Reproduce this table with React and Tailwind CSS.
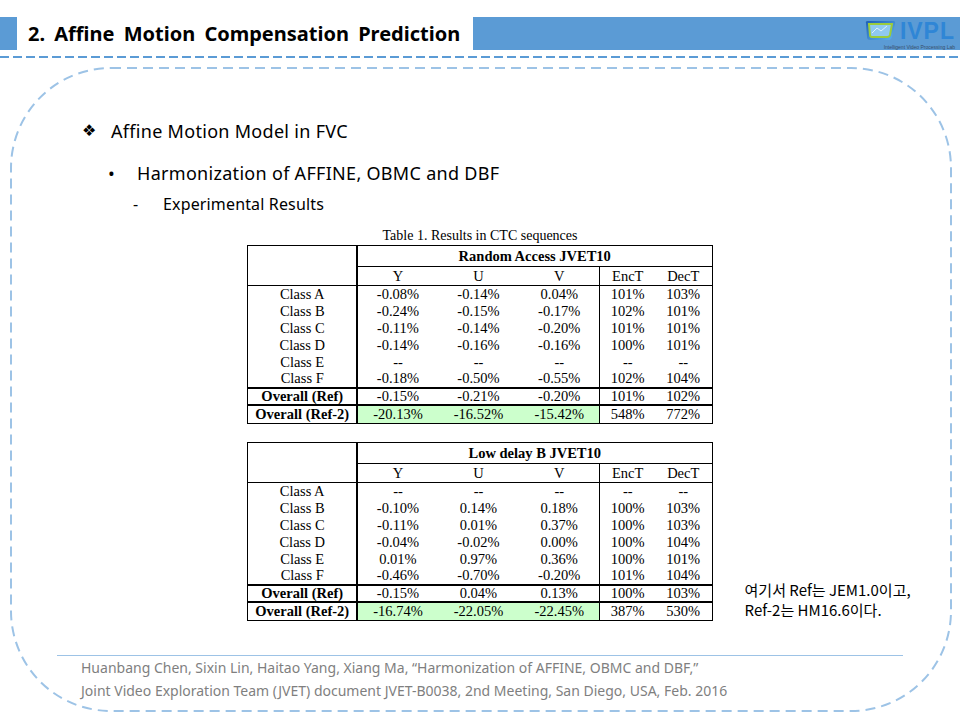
import React from 'react';

const ra = {
  title: 'Random Access JVET10',
  rows: [
    ['Class A', '-0.08%', '-0.14%', '0.04%', '101%', '103%'],
    ['Class B', '-0.24%', '-0.15%', '-0.17%', '102%', '101%'],
    ['Class C', '-0.11%', '-0.14%', '-0.20%', '101%', '101%'],
    ['Class D', '-0.14%', '-0.16%', '-0.16%', '100%', '101%'],
    ['Class E', '--', '--', '--', '--', '--'],
    ['Class F', '-0.18%', '-0.50%', '-0.55%', '102%', '104%'],
  ],
  ref: ['-0.15%', '-0.21%', '-0.20%', '101%', '102%'],
  ref2: ['-20.13%', '-16.52%', '-15.42%', '548%', '772%'],
};

const ld = {
  title: 'Low delay B JVET10',
  rows: [
    ['Class A', '--', '--', '--', '--', '--'],
    ['Class B', '-0.10%', '0.14%', '0.18%', '100%', '103%'],
    ['Class C', '-0.11%', '0.01%', '0.37%', '100%', '103%'],
    ['Class D', '-0.04%', '-0.02%', '0.00%', '100%', '104%'],
    ['Class E', '0.01%', '0.97%', '0.36%', '100%', '101%'],
    ['Class F', '-0.46%', '-0.70%', '-0.20%', '101%', '104%'],
  ],
  ref: ['-0.15%', '0.04%', '0.13%', '100%', '103%'],
  ref2: ['-16.74%', '-22.05%', '-22.45%', '387%', '530%'],
};

const ResultTable = ({ data }) => (
  <table className="mx-auto border-collapse border border-black text-[14.5px] text-black table-fixed w-[464px]" style={{ fontFamily: '"Liberation Serif", serif' }}>
    <colgroup>
      <col className="w-[109px]" />
      <col className="w-[81px]" />
      <col className="w-[81px]" />
      <col className="w-[81px]" />
      <col className="w-[55px]" />
      <col className="w-[57px]" />
    </colgroup>
    <tbody>
      <tr className="h-[21px]">
        <td rowSpan={2} className="border border-black border-r-2"></td>
        <td colSpan={5} className="border border-black text-center font-bold leading-none">{data.title}</td>
      </tr>
      <tr className="h-[19px] leading-none">
        <td className="text-center border-b border-black">Y</td>
        <td className="text-center border-b border-black">U</td>
        <td className="text-center border-b border-black">V</td>
        <td className="text-center border-b border-l border-black">EncT</td>
        <td className="text-center border-b border-black">DecT</td>
      </tr>
      {data.rows.map((r, i) => (
        <tr key={i} className="h-[17px] leading-none">
          <td className="text-center border-r-2 border-black">{r[0]}</td>
          <td className="text-center">{r[1]}</td>
          <td className="text-center">{r[2]}</td>
          <td className="text-center">{r[3]}</td>
          <td className="text-center border-l border-black">{r[4]}</td>
          <td className="text-center">{r[5]}</td>
        </tr>
      ))}
      <tr className="h-[17px] leading-none border-t-2 border-black">
        <td className="text-center font-bold border-r-2 border-black">Overall (Ref)</td>
        {data.ref.map((v, i) => (
          <td key={i} className={`text-center ${i === 3 ? 'border-l border-black' : ''}`}>{v}</td>
        ))}
      </tr>
      <tr className="h-[19px] leading-none border-t-2 border-black">
        <td className="text-center font-bold border-r-2 border-black">Overall (Ref-2)</td>
        {data.ref2.map((v, i) => (
          <td key={i} className={`text-center ${i < 3 ? 'bg-[#ccffcc]' : ''} ${i === 3 ? 'border-l border-black' : ''}`}>{v}</td>
        ))}
      </tr>
    </tbody>
  </table>
);

const Logo = () => (
  <div className="flex flex-col items-end pr-[5px] pt-[1px]">
    <div className="flex items-center gap-[4px] h-[26px]">
      <svg width="32" height="22" viewBox="0 0 32 22">
        <defs>
          <linearGradient id="tvb" x1="0" y1="0" x2="1" y2="1">
            <stop offset="0" stopColor="#1e5fb4" />
            <stop offset="1" stopColor="#5fb3ec" />
          </linearGradient>
        </defs>
        <path d="M2 3 Q1 1 4 1 L29 1 Q32 1 31 4 L28 17 Q27 20 24 20 L6 20 Q3 20 3 17 Z" fill="url(#tvb)" />
        <path d="M5 4 L28 4 L26 15 Q25.5 17 23 17 L8 17 Q6 17 6 15 Z" fill="#8fc9f0" stroke="#9ccc3c" strokeWidth="2" />
        <path d="M8 13 L13 8 L17 11 L23 6" fill="none" stroke="#dff2fb" strokeWidth="1" />
      </svg>
      <span className="text-[23px] leading-[26px] font-bold text-[#2f86d6] tracking-[1px]" style={{ fontFamily: '"Liberation Sans", sans-serif' }}>IVPL</span>
    </div>
    <span className="mt-[1px] text-[5px] leading-[5px] text-[#3a4f6a] whitespace-nowrap" style={{ fontFamily: '"Liberation Sans", sans-serif' }}>Intelligent Video Processing Lab</span>
  </div>
);

export default function App() {
  const body = { fontFamily: '"Noto Sans", "Noto Sans CJK KR", sans-serif' };
  return (
    <div className="relative w-[960px] h-[720px] bg-white overflow-hidden" style={body}>
      {/* rounded dashed frame */}
      <svg className="absolute left-0 top-0 pointer-events-none" width="960" height="720">
        <rect x="11" y="68" width="940" height="643" rx="100" ry="100" fill="none" stroke="#9dc3e6" strokeWidth="2" strokeDasharray="10 6" />
      </svg>

      {/* header */}
      <div className="relative mt-[17px] h-[33px] flex">
        <div className="w-[17px] bg-[#5b9bd5]" />
        <div className="w-[456px] flex items-center pl-[11px]">
          <span className="text-[20px] font-bold text-black [word-spacing:4px] whitespace-nowrap">2. Affine Motion Compensation Prediction</span>
        </div>
        <div className="flex-1 bg-[#5b9bd5] flex justify-end">
          <Logo />
        </div>
      </div>
      <div className="relative mt-[6px] h-[2px] bg-[repeating-linear-gradient(90deg,#5b9bd5_0_9px,transparent_9px_13px)]" />

      {/* bullets */}
      <div className="relative mt-[60px] h-[26px] flex items-center pl-[82px]">
        <span className="w-[29px] text-[16px] text-black" style={{ fontFamily: '"DejaVu Sans", sans-serif' }}>❖</span>
        <span className="text-[18px] tracking-[0.3px] text-black">Affine Motion Model in FVC</span>
      </div>
      <div className="relative mt-[16px] h-[26px] flex items-center pl-[108px]">
        <span className="w-[29px] text-[18px] text-black">•</span>
        <span className="text-[18px] tracking-[0.3px] text-black">Harmonization of AFFINE, OBMC and DBF</span>
      </div>
      <div className="relative mt-[7px] h-[22px] flex items-center pl-[133px]">
        <span className="w-[30px] text-[16px] text-black">-</span>
        <span className="text-[16px] tracking-[0.15px] text-black">Experimental Results</span>
      </div>

      {/* tables */}
      <div className="relative mt-[13px] h-[16px] leading-[16px] text-center text-[14px] text-black" style={{ fontFamily: '"Liberation Serif", serif' }}>
        Table 1. Results in CTC sequences
      </div>
      <div className="relative mt-[1px]">
        <ResultTable data={ra} />
      </div>
      <div className="relative mt-[18px] grid grid-cols-[1fr_auto_1fr]">
        <div />
        <ResultTable data={ld} />
        <div className="flex items-end pl-[32px] pb-[1px]">
          <p className="text-[15px] leading-[20px] text-black whitespace-nowrap" style={{ fontFamily: '"Noto Sans CJK KR", sans-serif' }}>
            여기서 Ref는 JEM1.0이고,<br />Ref-2는 HM16.6이다.
          </p>
        </div>
      </div>

      {/* footer */}
      <div className="relative mt-[34px] mx-[57px] h-[1px] bg-[#9dc3e6]" />
      <div className="relative pl-[81px] text-[14px] leading-[23px] text-[#7f7f7f]">
        <p>Huanbang Chen, Sixin Lin, Haitao Yang, Xiang Ma, “Harmonization of AFFINE, OBMC and DBF,”</p>
        <p>Joint Video Exploration Team (JVET) document JVET-B0038, 2nd Meeting, San Diego, USA, Feb. 2016</p>
      </div>
    </div>
  );
}
